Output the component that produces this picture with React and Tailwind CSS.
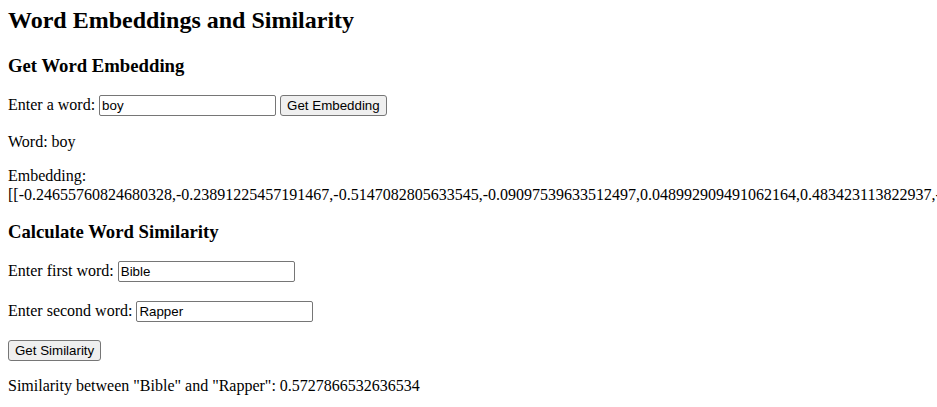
import { useState } from "react";

const embedding =
  "[[-0.24655760824680328,-0.23891225457191467,-0.5147082805633545,-0.09097539633512497,0.048992909491062164,0.483423113822937,-0.19483502209186554,0.3374229371547699,-0.0612337589263916,0.2290419638156891]]";

function App() {
  const [word, setWord] = useState("boy");
  const [first, setFirst] = useState("Bible");
  const [second, setSecond] = useState("Rapper");

  const inputCls =
    "w-[177px] h-[21px] mb-[3px] border border-[#767676] rounded-[2px] px-[2px] py-[1px] text-[13.33px] leading-[1.15] font-['Liberation_Sans',Arial,sans-serif] text-black bg-white";
  const buttonCls =
    "h-[21px] border border-[#767676] rounded-[3px] bg-[#efefef] px-[6px] text-[13.33px] leading-[1.15] font-['Liberation_Sans',Arial,sans-serif] text-black";

  return (
    <div className="w-full overflow-hidden bg-white">
      <div className="px-2 pt-[7px] font-['Liberation_Serif','Times_New_Roman',serif] text-[16px] text-black leading-[1.15]">
        {/* Title */}
        <h2 className="mt-0 mb-[20px] text-[24px] font-bold leading-[1.15]">
          Word Embeddings and Similarity
        </h2>

        {/* Get embedding */}
        <h3 className="my-[18.72px] text-[18.72px] font-bold leading-[1.15]">
          Get Word Embedding
        </h3>
        <p className="mt-4 mb-[14px]">
          Enter a word:{" "}
          <input
            className={inputCls}
            value={word}
            onChange={(e) => setWord(e.target.value)}
          />{" "}
          <button className={buttonCls}>Get Embedding</button>
        </p>
        <p className="mt-[14px] mb-4">Word: boy</p>
        <p className="mt-4 mb-[14px]">
          Embedding: <span className="whitespace-nowrap">{embedding}</span>
        </p>

        {/* Similarity */}
        <h3 className="mt-[16.7px] mb-[18.72px] text-[18.72px] font-bold leading-[1.15]">
          Calculate Word Similarity
        </h3>
        <p className="my-4">
          Enter first word:{" "}
          <input
            className={inputCls}
            value={first}
            onChange={(e) => setFirst(e.target.value)}
          />
        </p>
        <p className="mt-4 mb-[15px]">
          Enter second word:{" "}
          <input
            className={inputCls}
            value={second}
            onChange={(e) => setSecond(e.target.value)}
          />
        </p>
        <button className={buttonCls}>Get Similarity</button>
        <p className="mt-4 mb-0">
          Similarity between "Bible" and "Rapper": 0.5727866532636534
        </p>
      </div>
    </div>
  );
}

export default App;
